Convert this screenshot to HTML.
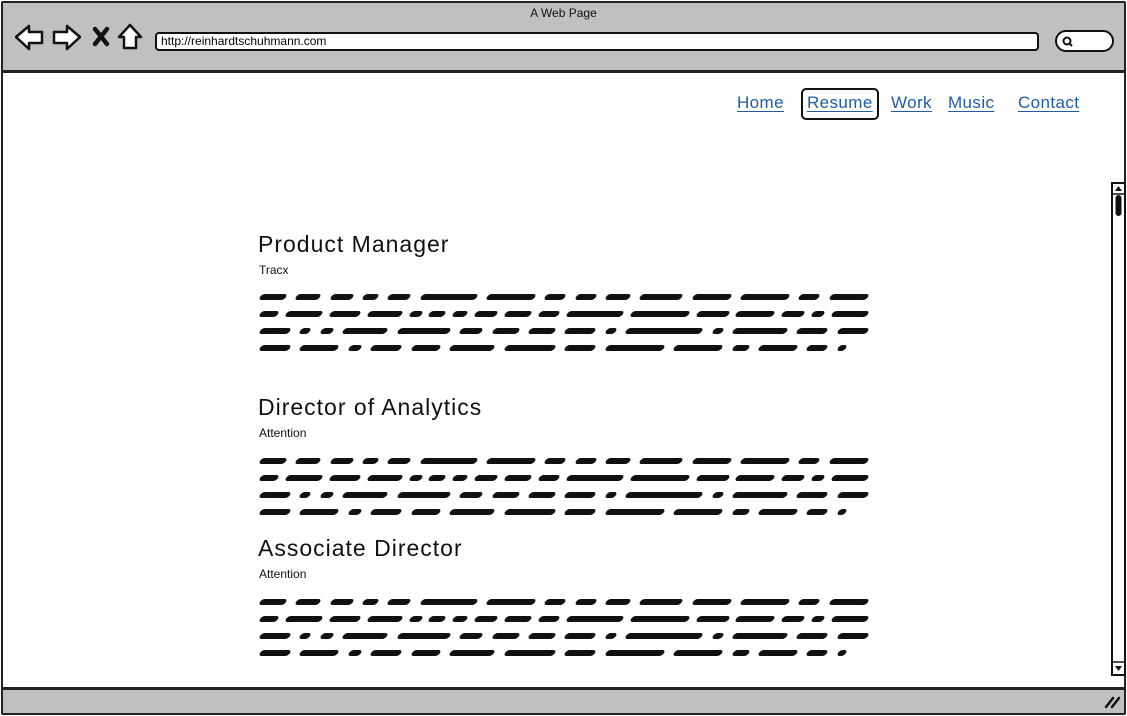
<!DOCTYPE html>
<html><head><meta charset="utf-8"><style>
*{margin:0;padding:0;box-sizing:border-box}
body{width:1127px;height:716px;overflow:hidden;background:#fff;position:relative;font-family:"Liberation Sans",sans-serif}
.frame{position:absolute;left:1px;top:1px;width:1125px;height:714px;border:2px solid #222;border-radius:2px}
.top{position:absolute;left:3px;top:3px;width:1121px;height:70px;background:#c0c0c0;border-bottom:3px solid #222}
.bot{position:absolute;left:3px;top:687px;width:1121px;height:27px;background:#c0c0c0;border-top:3px solid #222}
.title{position:absolute;top:6px;left:0;width:1127px;text-align:center;font-size:12px;color:#111}
.url{position:absolute;left:155px;top:32px;width:884px;height:19px;background:#fff;border:2px solid #111;border-radius:4px;font-size:12px;padding-left:4px;line-height:15px}
.search{position:absolute;left:1055px;top:30px;width:59px;height:22px;background:#fff;border:2px solid #111;border-radius:11px}
.nav a{position:absolute;top:93px;font-size:17px;color:#1f5ca3;text-decoration:underline;text-underline-offset:3px;letter-spacing:.4px}
.sel{position:absolute;left:801px;top:88px;width:78px;height:32px;border:2px solid #111;border-radius:5px}
.sb{position:absolute;left:1111px;top:182px;width:15px;height:494px;border:2px solid #111;background:#fff}
h2{position:absolute;left:258px;font-weight:normal;font-size:23px;color:#111;letter-spacing:1px}
.sub{position:absolute;left:259px;font-size:12px;color:#111}
.p{position:absolute;left:260px;width:608px}
.l{display:flex;justify-content:space-between;height:6px;margin-bottom:11px}
.l span{height:6px;background:#111;border-radius:3px;transform:skewX(-30deg)}
.l.last{width:586px}
</style></head><body>
<div class="top"></div>
<div class="bot"></div>
<div class="frame"></div>
<div class="title">A Web Page</div>
<svg style="position:absolute;left:0;top:0" width="150" height="60">
<path d="M16,37 L29,26 L29,32 L42,32 L42,43 L29,43 L29,49 Z" fill="#fff" stroke="#111" stroke-width="2.5" stroke-linejoin="round"/>
<path d="M80,37 L67,26 L67,32 L54,32 L54,43 L67,43 L67,49 Z" fill="#fff" stroke="#111" stroke-width="2.5" stroke-linejoin="round"/>
<path d="M95,29 L107,44 M107,29 L95,44" stroke="#111" stroke-width="4.5" stroke-linecap="round"/>
<path d="M130,25 L141,37 L136,37 L136,48 L124,48 L124,37 L119,37 Z" fill="#fff" stroke="#111" stroke-width="2.5" stroke-linejoin="round"/>
</svg>
<div class="url">http://reinhardtschuhmann.com</div>
<div class="search"><svg width="20" height="18" style="position:absolute;left:2px;top:1px"><circle cx="8" cy="8" r="3.5" fill="none" stroke="#111" stroke-width="2"/><path d="M10,10 L13,13" stroke="#111" stroke-width="2"/></svg></div>
<svg style="position:absolute;left:1103px;top:695px" width="18" height="14"><path d="M3,12 L10,3 M9,12 L16,3" stroke="#111" stroke-width="2.5" stroke-linecap="round"/></svg>
<div class="sel"></div>
<div class="nav">
<a style="left:737px">Home</a><a style="left:807px">Resume</a><a style="left:891px">Work</a><a style="left:948px">Music</a><a style="left:1018px">Contact</a>
</div>
<div class="sb"></div>
<svg style="position:absolute;left:1111px;top:182px" width="15" height="494"><path d="M4,9 L7.5,4 L11,9 Z" fill="#111"/><path d="M2,12 L13,12" stroke="#111" stroke-width="1.5"/><rect x="4.5" y="13" width="6" height="21" rx="3" fill="#111"/><path d="M2,480 L13,480" stroke="#111" stroke-width="1.5"/><path d="M4,484 L11,484 L7.5,489 Z" fill="#111"/></svg>

<h2 style="top:231px">Product Manager</h2>
<div class="sub" style="top:263px">Tracx</div>
<div class="p" style="top:294px">
<div class="l"><span style="width:26px"></span><span style="width:24px"></span><span style="width:22px"></span><span style="width:15px"></span><span style="width:22px"></span><span style="width:56px"></span><span style="width:48px"></span><span style="width:20px"></span><span style="width:20px"></span><span style="width:24px"></span><span style="width:42px"></span><span style="width:38px"></span><span style="width:48px"></span><span style="width:20px"></span><span style="width:38px"></span></div>
<div class="l"><span style="width:18px"></span><span style="width:36px"></span><span style="width:30px"></span><span style="width:34px"></span><span style="width:12px"></span><span style="width:16px"></span><span style="width:14px"></span><span style="width:22px"></span><span style="width:26px"></span><span style="width:20px"></span><span style="width:56px"></span><span style="width:58px"></span><span style="width:32px"></span><span style="width:38px"></span><span style="width:22px"></span><span style="width:12px"></span><span style="width:36px"></span></div>
<div class="l"><span style="width:30px"></span><span style="width:10px"></span><span style="width:12px"></span><span style="width:44px"></span><span style="width:52px"></span><span style="width:22px"></span><span style="width:26px"></span><span style="width:26px"></span><span style="width:30px"></span><span style="width:10px"></span><span style="width:76px"></span><span style="width:10px"></span><span style="width:54px"></span><span style="width:30px"></span><span style="width:30px"></span></div>
<div class="l last"><span style="width:30px"></span><span style="width:38px"></span><span style="width:12px"></span><span style="width:30px"></span><span style="width:28px"></span><span style="width:44px"></span><span style="width:50px"></span><span style="width:30px"></span><span style="width:58px"></span><span style="width:48px"></span><span style="width:16px"></span><span style="width:38px"></span><span style="width:20px"></span><span style="width:8px"></span></div>
</div>

<h2 style="top:394px">Director of Analytics</h2>
<div class="sub" style="top:426px">Attention</div>
<div class="p" style="top:458px">
<div class="l"><span style="width:26px"></span><span style="width:24px"></span><span style="width:22px"></span><span style="width:15px"></span><span style="width:22px"></span><span style="width:56px"></span><span style="width:48px"></span><span style="width:20px"></span><span style="width:20px"></span><span style="width:24px"></span><span style="width:42px"></span><span style="width:38px"></span><span style="width:48px"></span><span style="width:20px"></span><span style="width:38px"></span></div>
<div class="l"><span style="width:18px"></span><span style="width:36px"></span><span style="width:30px"></span><span style="width:34px"></span><span style="width:12px"></span><span style="width:16px"></span><span style="width:14px"></span><span style="width:22px"></span><span style="width:26px"></span><span style="width:20px"></span><span style="width:56px"></span><span style="width:58px"></span><span style="width:32px"></span><span style="width:38px"></span><span style="width:22px"></span><span style="width:12px"></span><span style="width:36px"></span></div>
<div class="l"><span style="width:30px"></span><span style="width:10px"></span><span style="width:12px"></span><span style="width:44px"></span><span style="width:52px"></span><span style="width:22px"></span><span style="width:26px"></span><span style="width:26px"></span><span style="width:30px"></span><span style="width:10px"></span><span style="width:76px"></span><span style="width:10px"></span><span style="width:54px"></span><span style="width:30px"></span><span style="width:30px"></span></div>
<div class="l last"><span style="width:30px"></span><span style="width:38px"></span><span style="width:12px"></span><span style="width:30px"></span><span style="width:28px"></span><span style="width:44px"></span><span style="width:50px"></span><span style="width:30px"></span><span style="width:58px"></span><span style="width:48px"></span><span style="width:16px"></span><span style="width:38px"></span><span style="width:20px"></span><span style="width:8px"></span></div>
</div>

<h2 style="top:535px">Associate Director</h2>
<div class="sub" style="top:567px">Attention</div>
<div class="p" style="top:599px">
<div class="l"><span style="width:26px"></span><span style="width:24px"></span><span style="width:22px"></span><span style="width:15px"></span><span style="width:22px"></span><span style="width:56px"></span><span style="width:48px"></span><span style="width:20px"></span><span style="width:20px"></span><span style="width:24px"></span><span style="width:42px"></span><span style="width:38px"></span><span style="width:48px"></span><span style="width:20px"></span><span style="width:38px"></span></div>
<div class="l"><span style="width:18px"></span><span style="width:36px"></span><span style="width:30px"></span><span style="width:34px"></span><span style="width:12px"></span><span style="width:16px"></span><span style="width:14px"></span><span style="width:22px"></span><span style="width:26px"></span><span style="width:20px"></span><span style="width:56px"></span><span style="width:58px"></span><span style="width:32px"></span><span style="width:38px"></span><span style="width:22px"></span><span style="width:12px"></span><span style="width:36px"></span></div>
<div class="l"><span style="width:30px"></span><span style="width:10px"></span><span style="width:12px"></span><span style="width:44px"></span><span style="width:52px"></span><span style="width:22px"></span><span style="width:26px"></span><span style="width:26px"></span><span style="width:30px"></span><span style="width:10px"></span><span style="width:76px"></span><span style="width:10px"></span><span style="width:54px"></span><span style="width:30px"></span><span style="width:30px"></span></div>
<div class="l last"><span style="width:30px"></span><span style="width:38px"></span><span style="width:12px"></span><span style="width:30px"></span><span style="width:28px"></span><span style="width:44px"></span><span style="width:50px"></span><span style="width:30px"></span><span style="width:58px"></span><span style="width:48px"></span><span style="width:16px"></span><span style="width:38px"></span><span style="width:20px"></span><span style="width:8px"></span></div>
</div>
</body></html>
